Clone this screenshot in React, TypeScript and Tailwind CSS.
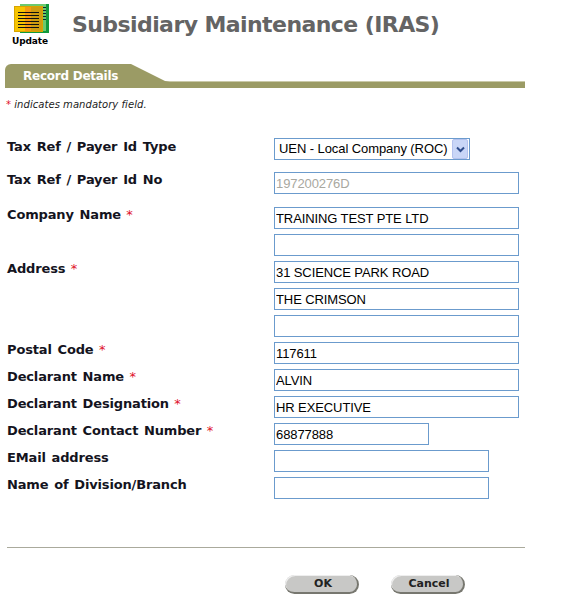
const VERDANA = "font-['DejaVu_Sans',sans-serif]";

type Row = { label?: string; required?: boolean; value?: string; width?: string };

const ROWS: Row[] = [
  { label: "Company Name", required: true, value: "TRAINING TEST PTE LTD" },
  { value: "" },
  { label: "Address", required: true, value: "31 SCIENCE PARK ROAD" },
  { value: "THE CRIMSON" },
  { value: "" },
  { label: "Postal Code", required: true, value: "117611" },
  { label: "Declarant Name", required: true, value: "ALVIN" },
  { label: "Declarant Designation", required: true, value: "HR EXECUTIVE" },
  { label: "Declarant Contact Number", required: true, value: "68877888", width: "w-[155px]" },
  { label: "EMail address", value: "", width: "w-[215px]" },
  { label: "Name of Division/Branch", value: "", width: "w-[215px]" },
];

function Label({ text, required }: { text?: string; required?: boolean }) {
  return (
    <div className="h-[22px] whitespace-nowrap pl-[7px] text-[13px] leading-[16px] font-bold tracking-[-0.15px] [word-spacing:1.4px] text-[#14141e] font-['DejaVu_Sans',sans-serif]">
      {text}
      {required && <span className="font-normal text-[#e0102a]"> *</span>}
    </div>
  );
}

function Field({ value, width = "w-[245px]", muted }: { value?: string; width?: string; muted?: boolean }) {
  return (
    <input
      readOnly
      value={value}
      className={`${width} block h-[22px] border border-[#6b9bcd] bg-white px-[1px] text-[13px] font-['Liberation_Sans',sans-serif] tracking-[-0.1px] outline-none ${muted ? "text-[#a8a8a0]" : "text-black"}`}
    />
  );
}

function UpdateIcon() {
  return (
    <div className="flex w-[48px] flex-col items-center">
      <svg className="ml-[3px]" width="36" height="30" viewBox="0 0 36 30">
        <rect x="6" y="0" width="29" height="29" fill="#0f9a3c" />
        <rect x="6" y="0" width="26" height="27" fill="#6cc96e" />
        <rect x="0.5" y="2.5" width="28" height="25" fill="#f6c400" stroke="#d7a400" />
        <rect x="11" y="3" width="6" height="24" fill="#f59a12" />
        <rect x="17" y="3" width="11" height="24" fill="#cf9c10" />
        <path d="M4 8.5H25M4 11.5H25M4 14.5H25M4 17.5H25M4 20.5H25M4 23.5H25" stroke="#111" strokeWidth="1" />
        <path d="M29 3.5H32M29 6.5H32M29 9.5H32M29 12.5H32M29 15.5H32" stroke="#123" strokeWidth="1" />
      </svg>
      <span className="mt-[1px] text-[9px] leading-[12px] font-bold tracking-[-0.1px] text-black font-['DejaVu_Sans',sans-serif]">Update</span>
    </div>
  );
}

function PillButton({ text }: { text: string }) {
  return (
    <button className="h-[19px] w-[74px] rounded-full border-r-2 border-b-2 border-[#77776f] bg-[#c8c8c6] pl-[4px] text-[11px] leading-[16px] font-bold text-[#222] shadow-[inset_1px_1px_0_#eeeeee] font-['DejaVu_Sans',sans-serif]">
      {text}
    </button>
  );
}

export default function App() {
  return (
    <div className="h-[603px] w-[583px] overflow-hidden bg-white">
      <div className="flex h-[64px] items-start">
        <div className="mt-[4px] ml-[6px]">
          <UpdateIcon />
        </div>
        <h1 className={`mt-[10px] ml-[18px] text-[22px] leading-[30px] font-bold tracking-[-0.58px] text-[#646464] ${VERDANA}`}>
          Subsidiary Maintenance (IRAS)
        </h1>
      </div>

      <div className="relative ml-[5px] h-[24px] w-[520px]">
        <div className="absolute right-0 bottom-0 left-0 h-[7px] border-t border-t-[#c9c9a8] bg-[#9b9b65]" />
        <div className="absolute top-0 left-0 h-[24px] w-[165px] rounded-tl-[6px] bg-[#9b9b65] [clip-path:polygon(0_0,126px_0,160px_17px,165px_18px,165px_24px,0_24px)]" />
        <span className="absolute top-[4px] left-[18px] text-[12px] leading-[16px] font-bold tracking-[-0.25px] text-white font-['DejaVu_Sans',sans-serif]">
          Record Details
        </span>
      </div>

      <p className={`mt-[10px] ml-[6px] h-[14px] text-[10px] leading-[14px] tracking-[0.05px] text-[#222] italic ${VERDANA}`}>
        <span className="text-[#e0102a]">*</span> indicates mandatory field.
      </p>

      <div className="mt-[26px] grid grid-cols-[274px_1fr]">
        <div className="h-[34px] pt-[1px]">
          <Label text="Tax Ref / Payer Id Type" />
        </div>
        <div className="h-[34px]">
          <div className="flex h-[22px] w-[196px] items-center justify-between border border-[#6b9bcd] bg-white pr-[1px] pl-[4px] text-[13px] tracking-[-0.08px] text-black font-['Liberation_Sans',sans-serif]">
            <span className="whitespace-nowrap">UEN - Local Company (ROC)</span>
            <span className="flex h-[20px] w-[16px] items-center justify-center rounded-[2px] border border-[#b4c2ee] bg-[#c9d6f7]">
              <svg width="9" height="7" viewBox="0 0 9 7">
                <path d="M1 1.5L4.5 5L8 1.5" fill="none" stroke="#2f4d8c" strokeWidth="2" />
              </svg>
            </span>
          </div>
        </div>
        <div className="h-[35px]">
          <Label text="Tax Ref / Payer Id No" />
        </div>
        <div className="h-[35px]">
          <Field value="197200276D" muted />
        </div>
        {ROWS.map((r, i) => (
          <div key={i} className="contents">
            <div className="h-[27px]">
              <Label text={r.label} required={r.required} />
            </div>
            <div className="h-[27px]">
              <Field value={r.value} width={r.width} />
            </div>
          </div>
        ))}
      </div>

      <div className="mt-[43px] ml-[7px] h-px w-[518px] bg-[#aaaa9c]" />

      <div className="mt-[27px] ml-[285px] flex gap-[32px]">
        <PillButton text="OK" />
        <PillButton text="Cancel" />
      </div>
    </div>
  );
}
